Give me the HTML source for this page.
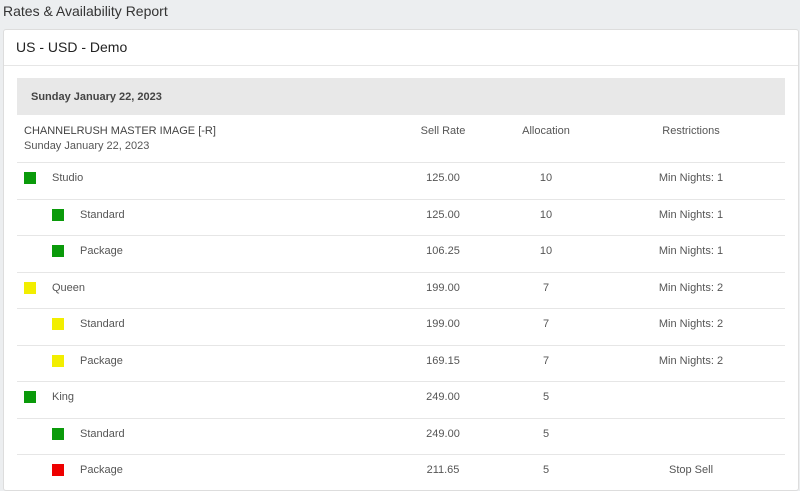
<!DOCTYPE html><html><head><style>
body{margin:0;width:800px;height:476px;overflow:hidden;background:#eceef0;font-family:"Liberation Sans",sans-serif;color:#555;}
.t{position:absolute;left:3px;top:3px;font-size:14px;color:#333;}
.card{position:absolute;left:3px;top:29px;width:794px;height:460px;background:#fff;border:1px solid #ddd;border-radius:3px;}
.ch{position:absolute;left:12px;top:9px;font-size:14px;color:#222;}
.hl{position:absolute;left:0;right:0;top:35px;border-top:1px solid #e6e6e6;}
.band{position:absolute;left:13px;width:768px;top:48px;height:37px;background:#e8e8e8;}
.band span{position:absolute;left:14px;top:13px;font-size:11px;font-weight:bold;color:#444;}
.a{position:absolute;font-size:11px;white-space:nowrap;}
.c{transform:translateX(-50%);}
.line{position:absolute;left:13px;width:768px;border-top:1px solid #e6e6e6;}
.sq{position:absolute;width:12px;height:12px;}
</style></head><body>
<div class="t">Rates &amp; Availability Report</div>
<div class="card">
<div class="ch">US - USD - Demo</div><div class="hl"></div>
<div class="band"><span>Sunday January 22, 2023</span></div>
<div class="a" style="left:20px;top:95px;color:#444">CHANNELRUSH MASTER IMAGE [-R]</div>
<div class="a" style="left:20px;top:110px">Sunday January 22, 2023</div>
<div class="a c" style="left:439px;top:95px">Sell Rate</div>
<div class="a c" style="left:542px;top:95px">Allocation</div>
<div class="a c" style="left:687px;top:95px">Restrictions</div>
<div id="rows"></div>
</div>
<script>
var d=[[0,'#0a9a0a','Studio','125.00','10','Min Nights: 1'],[1,'#0a9a0a','Standard','125.00','10','Min Nights: 1'],[1,'#0a9a0a','Package','106.25','10','Min Nights: 1'],[0,'#f2ee00','Queen','199.00','7','Min Nights: 2'],[1,'#f2ee00','Standard','199.00','7','Min Nights: 2'],[1,'#f2ee00','Package','169.15','7','Min Nights: 2'],[0,'#0a9a0a','King','249.00','5',''],[1,'#0a9a0a','Standard','249.00','5',''],[1,'#ee0000','Package','211.65','5','Stop Sell']];
var h='';d.forEach(function(r,i){var y=132+i*36.5;h+='<div class="line" style="top:'+y+'px"></div>';var cy=y+17;var sx=r[0]?48:20;h+='<div class="sq" style="left:'+sx+'px;top:'+(cy-7)+'px;background:'+r[1]+'"></div>';h+='<div class="a" style="left:'+(sx+28)+'px;top:'+(cy-7)+'px">'+r[2]+'</div>';h+='<div class="a c" style="left:439px;top:'+(cy-7)+'px">'+r[3]+'</div><div class="a c" style="left:542px;top:'+(cy-7)+'px">'+r[4]+'</div><div class="a c" style="left:687px;top:'+(cy-7)+'px">'+r[5]+'</div>';});
document.getElementById('rows').innerHTML=h;
</script>
</body></html>
